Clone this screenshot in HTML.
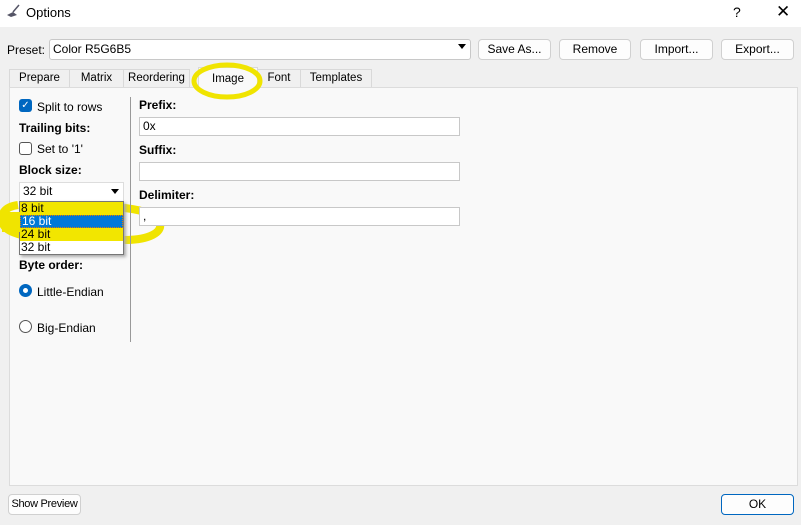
<!DOCTYPE html>
<html><head><meta charset="utf-8"><style>
*{box-sizing:border-box;margin:0;padding:0}
body{width:801px;height:525px;background:#f0f0f0;font-family:"Liberation Sans",sans-serif;font-size:12px;color:#000;position:relative;overflow:hidden}
.a{position:absolute;white-space:nowrap}
.btn{position:absolute;background:#fdfdfd;border:1px solid #d0d0d0;border-radius:4px;text-align:center;line-height:19px;font-size:12px;white-space:nowrap}
.tab{position:absolute;top:69px;height:18px;border:1px solid #d9d9d9;border-bottom:none;background:#f0f0f0;text-align:center;line-height:17px;font-size:11.5px;white-space:nowrap}
.inp{position:absolute;background:#fff;border:1px solid #c8c8c8;height:19px;font-size:12px;line-height:17px;padding-left:3px}
b{font-weight:bold}
</style></head><body>
<div class="a" style="left:0;top:0;width:801px;height:27px;background:#fff"></div>
<svg class="a" style="left:5px;top:4px" width="16" height="14"><path d="M2 11 L8 8 L12 11 L6 13Z" fill="#556"/><path d="M8 8 L14 1" stroke="#556" stroke-width="1.5"/></svg>
<div class="a" style="left:26px;top:5px;font-size:13px">Options</div>
<div class="a" style="left:733px;top:4px;font-size:14px">?</div>
<div class="a" style="left:776px;top:2px;font-size:17px">✕</div>

<div class="a" style="left:7px;top:43px">Preset:</div>
<div class="inp" style="left:49px;top:39px;width:422px;height:21px;border-radius:3px;line-height:19px">Color R5G6B5</div>
<div class="a" style="left:458px;top:44px;width:0;height:0;border-left:4px solid transparent;border-right:4px solid transparent;border-top:5px solid #000"></div>
<div class="btn" style="left:478px;top:39px;width:73px;height:21px">Save As...</div>
<div class="btn" style="left:559px;top:39px;width:72px;height:21px">Remove</div>
<div class="btn" style="left:640px;top:39px;width:73px;height:21px">Import...</div>
<div class="btn" style="left:721px;top:39px;width:73px;height:21px">Export...</div>

<div class="a" style="left:9px;top:87px;width:789px;height:399px;background:#f9f9f9;border:1px solid #dcdcdc"></div>
<div class="tab" style="left:9px;width:61px">Prepare</div>
<div class="tab" style="left:69px;width:55px">Matrix</div>
<div class="tab" style="left:123px;width:67px">Reordering</div>
<div class="tab" style="left:198px;top:67px;height:21px;width:60px;background:#f9f9f9;line-height:22px">Image</div>
<div class="tab" style="left:257px;width:44px">Font</div>
<div class="tab" style="left:300px;width:72px">Templates</div>

<div class="a" style="left:19px;top:99px;width:13px;height:13px;background:#0067c0;border-radius:3px;color:#fff;font-size:10px;text-align:center;line-height:13px">✓</div>
<div class="a" style="left:37px;top:100px">Split to rows</div>
<div class="a" style="left:19px;top:121px"><b>Trailing bits:</b></div>
<div class="a" style="left:19px;top:142px;width:13px;height:13px;border:1px solid #555;border-radius:3px;background:#fff"></div>
<div class="a" style="left:37px;top:142px">Set to '1'</div>
<div class="a" style="left:19px;top:163px"><b>Block size:</b></div>
<div class="inp" style="left:19px;top:182px;width:105px;height:20px;border-color:#ddd">32 bit</div>
<div class="a" style="left:111px;top:189px;width:0;height:0;border-left:4px solid transparent;border-right:4px solid transparent;border-top:5px solid #000"></div>

<svg class="a" style="left:0;top:0" width="801" height="525">
<ellipse cx="227" cy="81" rx="33" ry="16" fill="none" stroke="#f0e400" stroke-width="5"/>
<path d="M18 205 C4 207 0 214 3 224 C6 232 20 237 60 240 L124 240 C150 240 162 232 160 224 C158 216 145 210 124 208" fill="none" stroke="#f0e400" stroke-width="8"/>
</svg>

<div class="a" style="left:19px;top:201px;width:105px;height:54px;background:#fff;border:1px solid #777;box-shadow:2px 2px 3px #aaa"></div>
<div class="a" style="left:20px;top:202px;width:103px;height:13px;background:#f2e600"></div>
<div class="a" style="left:20px;top:228px;width:103px;height:13px;background:#f2e600"></div>
<div class="a" style="left:21px;top:202px;line-height:13px">8 bit<br>&nbsp;<br>24 bit<br>32 bit</div>
<div class="a" style="left:20px;top:215px;width:103px;height:13px;background:#0078d7;color:#fff;padding-left:1px;line-height:11px;border:1px dotted #e08000">16 bit</div>
<div class="a" style="left:2px;top:212px;width:18px;height:20px;background:#f0e400"></div>

<div class="a" style="left:19px;top:258px"><b>Byte order:</b></div>
<div class="a" style="left:19px;top:284px;width:13px;height:13px;border-radius:50%;background:#fff;border:4px solid #0067c0"></div>
<div class="a" style="left:37px;top:285px">Little-Endian</div>
<div class="a" style="left:19px;top:320px;width:13px;height:13px;border-radius:50%;background:#fff;border:1px solid #555"></div>
<div class="a" style="left:37px;top:321px">Big-Endian</div>
<div class="a" style="left:130px;top:97px;width:1px;height:245px;background:#999"></div>

<div class="a" style="left:139px;top:98px"><b>Prefix:</b></div>
<div class="inp" style="left:139px;top:117px;width:321px">0x</div>
<div class="a" style="left:139px;top:143px"><b>Suffix:</b></div>
<div class="inp" style="left:139px;top:162px;width:321px"></div>
<div class="a" style="left:139px;top:188px"><b>Delimiter:</b></div>
<div class="inp" style="left:139px;top:207px;width:321px">,</div>

<div class="btn" style="left:8px;top:494px;width:73px;height:21px;line-height:19px;font-size:11px;letter-spacing:-0.3px">Show Preview</div>
<div class="btn" style="left:721px;top:494px;width:73px;height:21px;border-color:#0067c0">OK</div>
</body></html>
